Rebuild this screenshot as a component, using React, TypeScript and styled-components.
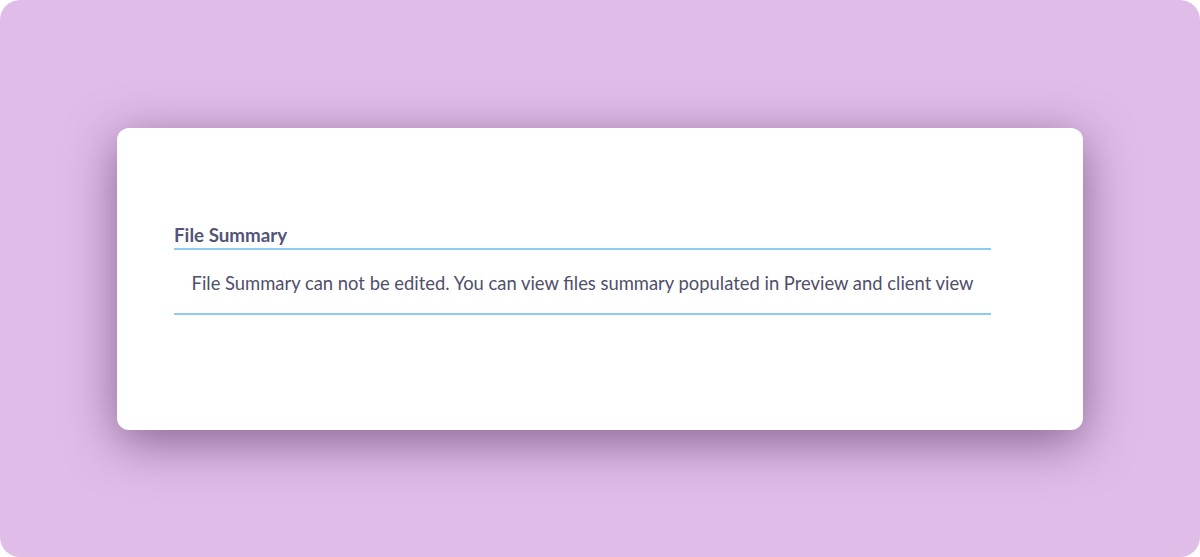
import styled, { createGlobalStyle } from 'styled-components';

const GlobalStyle = createGlobalStyle`
  html, body {
    margin: 0;
    padding: 0;
    background: #ffffff;
  }
  body {
    font-family: Lato, "Open Sans", sans-serif;
  }
`;

const Frame = styled.div`
  width: 1200px;
  height: 557px;
  box-sizing: border-box;
  background: #e0bde8;
  border-radius: 20px;
  display: flex;
  align-items: center;
  justify-content: center;
  overflow: hidden;
`;

const Card = styled.div`
  width: 966px;
  height: 302px;
  box-sizing: border-box;
  background: #ffffff;
  border-radius: 12px;
  box-shadow: 0 12px 50px rgba(70, 35, 80, 0.58);
  padding: 96px 92px 0 57px;
`;

const Title = styled.h3`
  margin: 0;
  font-size: 18.8px;
  font-weight: 700;
  line-height: 22px;
  color: #545476;
  padding-bottom: 2px;
  border-bottom: 2px solid #8ecbf0;
`;

const Note = styled.p`
  margin: 0;
  padding: 21px 0 18px;
  text-align: center;
  font-size: 18.4px;
  line-height: 24px;
  color: #4f4f6b;
  border-bottom: 2px solid #8ecbf0;
`;

export default function App() {
  return (
    <>
      <GlobalStyle />
      <Frame>
        <Card>
          <Title>File Summary</Title>
          <Note>
            File Summary can not be edited. You can view files summary populated in Preview and client view
          </Note>
        </Card>
      </Frame>
    </>
  );
}
